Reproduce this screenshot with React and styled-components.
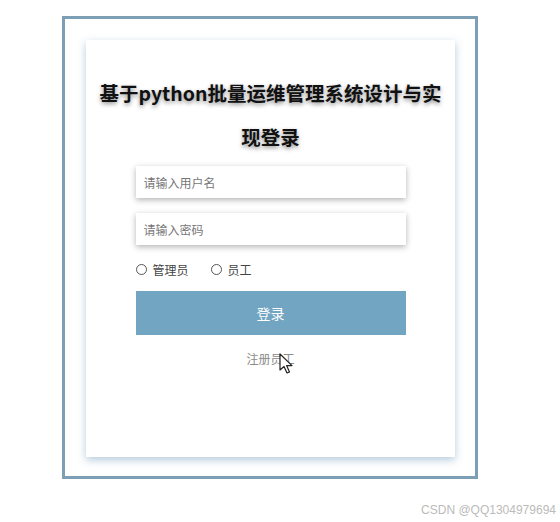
import React from 'react'
import styled, { createGlobalStyle } from 'styled-components'

const Global = createGlobalStyle`
  html, body { margin: 0; padding: 0; background: #fff; }
  body { font-family: "Microsoft YaHei", "Noto Sans CJK SC", "Noto Sans", sans-serif; }
`

export default function App() {
  return (
    <Page>
      <Global />
      <Frame>
        <Card>
          <Title>基于python批量运维管理系统设计与实现登录</Title>
          <Form>
            <Field placeholder="请输入用户名" />
            <Field placeholder="请输入密码" type="password" />
            <Roles>
              <Role><Dot />管理员</Role>
              <Role><Dot />员工</Role>
            </Roles>
            <Submit>登录</Submit>
            <Register>
              注册员工
              <Cursor width="16" height="22" viewBox="0 0 16 22">
                <path d="M1 1 L1 17 L5 13.5 L8 20 L10.5 19 L7.6 12.6 L13 12.6 Z" fill="#fff" stroke="#222" strokeWidth="1.2" strokeLinejoin="round" />
              </Cursor>
            </Register>
          </Form>
        </Card>
      </Frame>
      <Mark>CSDN @QQ1304979694</Mark>
    </Page>
  )
}

const Page = styled.div`
  position: relative;
  width: 560px;
  height: 522px;
  padding: 16px 0 0 62px;
  box-sizing: border-box;
`

const Frame = styled.div`
  width: 416px;
  height: 463px;
  box-sizing: border-box;
  border: 3px solid #7c9fb6;
  padding: 21px 0 0 21px;
`

const Card = styled.div`
  width: 369px;
  height: 417px;
  background: #fff;
  box-shadow: 0 3px 8px rgba(90, 140, 175, 0.45);
  padding-top: 31px;
  box-sizing: border-box;
  display: flex;
  flex-direction: column;
  align-items: center;
`

const Title = styled.h1`
  margin: 0;
  padding: 0 4px;
  font-size: 19.5px;
  line-height: 44px;
  font-weight: bold;
  color: #111;
  text-align: center;
  text-shadow: 0 2px 4px rgba(0, 0, 0, 0.45);
`

const Form = styled.div`
  width: 270px;
  margin-top: 7px;
  display: flex;
  flex-direction: column;
`

const Field = styled.input`
  height: 32px;
  border: none;
  outline: none;
  padding: 0 8px;
  margin-bottom: 15px;
  font-family: inherit;
  font-size: 12px;
  color: #333;
  background: #fff;
  box-shadow: 0 2px 6px rgba(0, 0, 0, 0.3);
  &::placeholder { color: #777; }
`

const Roles = styled.div`
  display: flex;
  gap: 22px;
  height: 16px;
  align-items: center;
  margin: 1px 0 14px 0;
  font-size: 12px;
  color: #444;
`

const Role = styled.label`
  display: flex;
  align-items: center;
  gap: 6px;
`

const Dot = styled.span`
  width: 9px;
  height: 9px;
  border: 1px solid #555;
  border-radius: 50%;
`

const Submit = styled.button`
  height: 44px;
  border: none;
  background: #72a5c2;
  color: #fff;
  font-family: inherit;
  font-size: 14px;
  cursor: pointer;
`

const Register = styled.div`
  position: relative;
  align-self: center;
  margin-top: 15px;
  font-size: 12px;
  color: #8a8a8a;
`

const Cursor = styled.svg`
  position: absolute;
  left: 33px;
  top: 3px;
`

const Mark = styled.div`
  position: absolute;
  right: 4px;
  bottom: 5px;
  font-family: "Liberation Sans", "Noto Sans", sans-serif;
  font-size: 12px;
  color: #bbb;
`
